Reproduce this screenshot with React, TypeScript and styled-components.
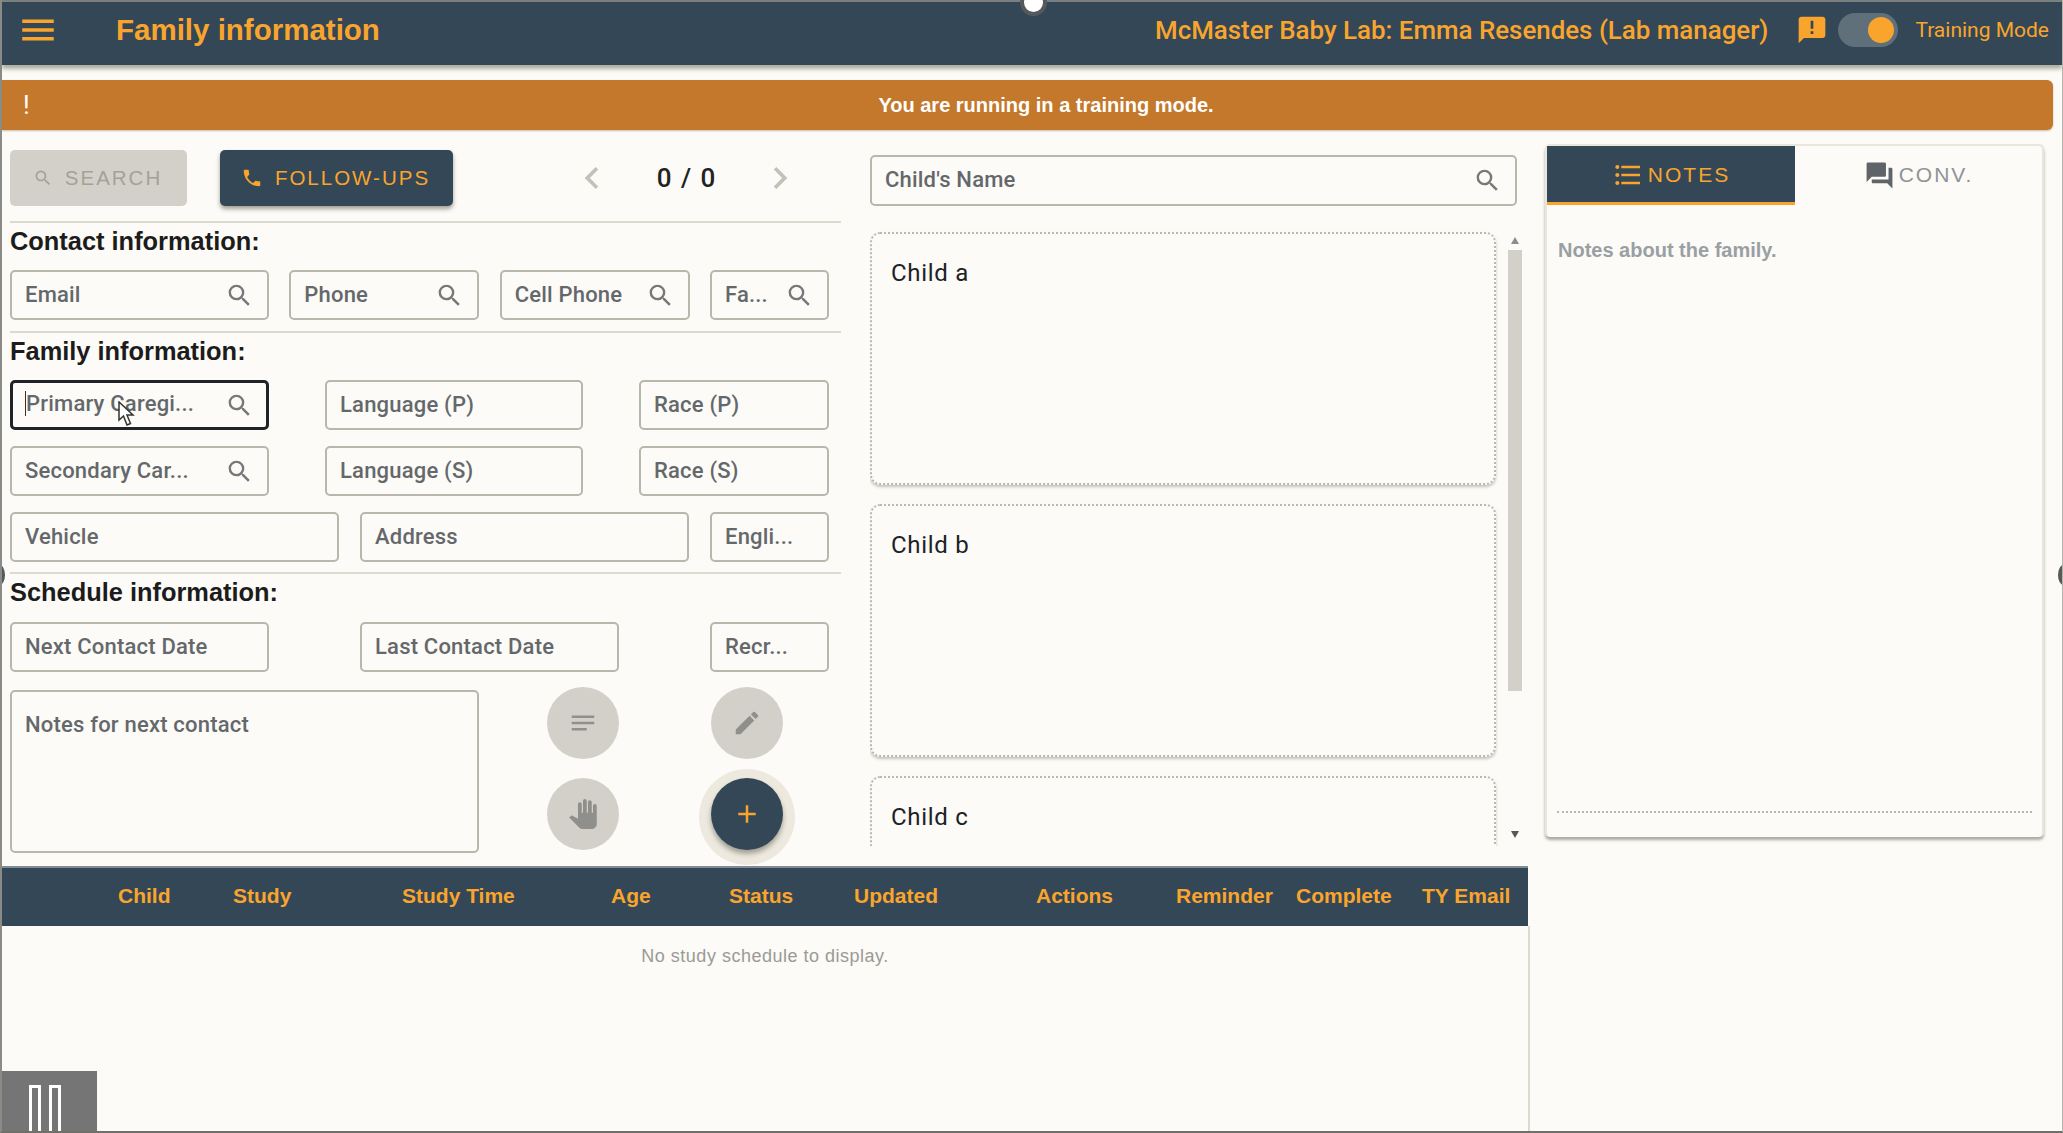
import styled, { createGlobalStyle } from 'styled-components';
import {
  MdAdd,
  MdAnnouncement,
  MdChevronLeft,
  MdChevronRight,
  MdEdit,
  MdFormatListBulleted,
  MdMenu,
  MdNotes,
  MdPanTool,
  MdPhone,
  MdQuestionAnswer,
  MdSearch,
} from 'react-icons/md';

const navy = '#344756';
const orange = '#f9a52d';
const paper = '#fcfbf7';
const line = '#b9b6ac';
const arial = "'Liberation Sans', Arial, sans-serif";

const GlobalStyle = createGlobalStyle`
  html, body {
    margin: 0;
    background: ${paper};
    overflow: hidden;
  }
  * {
    box-sizing: border-box;
  }
`;

const contactRow = '259px 190px 190px 119px';
const familyRow = '259px 258px 190px';
const vehicleRow = '329px 329px 119px';
const scheduleRow = '259px 259px 119px';

const columns = [
  { label: 'Child', width: 115 },
  { label: 'Study', width: 169 },
  { label: 'Study Time', width: 209 },
  { label: 'Age', width: 118 },
  { label: 'Status', width: 125 },
  { label: 'Updated', width: 182 },
  { label: 'Actions', width: 140 },
  { label: 'Reminder', width: 120 },
  { label: 'Complete', width: 126 },
  { label: 'TY Email', width: 100 },
];

const Field = ({
  label,
  search,
  focused,
}: {
  label: string;
  search?: boolean;
  focused?: boolean;
}) => (
  <FieldBox $focused={focused}>
    <FieldLabel $focused={focused}>{label}</FieldLabel>
    {search && <MdSearch size={29} color="#77787a" />}
    {focused && (
      <Pointer width="20" height="26" viewBox="0 0 20 26">
        <path
          d="M2 1 L2 19 L6.5 15 L10 24 L13.5 22.5 L10 14 L16 14 Z"
          fill="#fff"
          stroke="#333"
          strokeWidth="1.5"
        />
      </Pointer>
    )}
  </FieldBox>
);

const App = () => {
  return (
    <Frame>
      <GlobalStyle />
      <TopNotch />
      <SideHandle $side="left" />
      <SideHandle $side="right" />

      <TopBar>
        <MenuSlot>
          <MdMenu size={42} color={orange} />
        </MenuSlot>
        <PageTitle>Family information</PageTitle>
        <UserName>McMaster Baby Lab: Emma Resendes (Lab manager)</UserName>
        <MdAnnouncement size={32} color={orange} />
        <Toggle>
          <ToggleKnob />
        </Toggle>
        <ModeLabel>Training Mode</ModeLabel>
      </TopBar>

      <Banner>
        <BannerMark>!</BannerMark>
        <BannerText>You are running in a training mode.</BannerText>
      </Banner>

      <Content>
        <MainArea>
          <Upper>
            <FamilyColumn>
              <Toolbar>
                <SearchButton>
                  <MdSearch size={20} />
                  SEARCH
                </SearchButton>
                <FollowUpButton>
                  <MdPhone size={22} />
                  FOLLOW-UPS
                </FollowUpButton>
                <Pager>
                  <MdChevronLeft size={44} color="#c4c2b8" />
                  <PagerCount>0 / 0</PagerCount>
                  <MdChevronRight size={44} color="#c4c2b8" />
                </Pager>
              </Toolbar>

              <ToolbarDivider />
              <SectionTitle>Contact information:</SectionTitle>
              <FieldRow $columns={contactRow}>
                <Field label="Email" search />
                <Field label="Phone" search />
                <Field label="Cell Phone" search />
                <Field label="Fa..." search />
              </FieldRow>

              <Divider />
              <SectionTitle>Family information:</SectionTitle>
              <FieldStack>
                <FieldRow $columns={familyRow}>
                  <Field label="Primary Caregi..." search focused />
                  <Field label="Language (P)" />
                  <Field label="Race (P)" />
                </FieldRow>
                <FieldRow $columns={familyRow}>
                  <Field label="Secondary Car..." search />
                  <Field label="Language (S)" />
                  <Field label="Race (S)" />
                </FieldRow>
                <FieldRow $columns={vehicleRow}>
                  <Field label="Vehicle" />
                  <Field label="Address" />
                  <Field label="Engli..." />
                </FieldRow>
              </FieldStack>

              <Divider />
              <ScheduleTitle>Schedule information:</ScheduleTitle>
              <FieldRow $columns={scheduleRow}>
                <Field label="Next Contact Date" />
                <Field label="Last Contact Date" />
                <Field label="Recr..." />
              </FieldRow>

              <NotesRow>
                <NotesBox>Notes for next contact</NotesBox>
                <ActionGrid>
                  <RoundButton>
                    <MdNotes size={30} />
                  </RoundButton>
                  <RoundButton>
                    <MdEdit size={30} />
                  </RoundButton>
                  <RoundButton>
                    <MdPanTool size={30} />
                  </RoundButton>
                  <AddButton>
                    <MdAdd size={30} />
                  </AddButton>
                </ActionGrid>
              </NotesRow>
            </FamilyColumn>

            <ChildColumn>
              <ChildSearch>
                <FieldLabel>Child's Name</FieldLabel>
                <MdSearch size={29} color="#77787a" />
              </ChildSearch>
              <ChildList>
                <ChildCards>
                  <ChildCard>Child a</ChildCard>
                  <ChildCard>Child b</ChildCard>
                  <ChildCard>Child c</ChildCard>
                </ChildCards>
                <ScrollBar>
                  <ScrollArrow $up />
                  <ScrollThumb />
                  <ScrollArrow />
                </ScrollBar>
              </ChildList>
            </ChildColumn>
          </Upper>

          <ScheduleHead>
            {columns.map((column) => (
              <HeadCell key={column.label} $width={column.width}>
                {column.label}
              </HeadCell>
            ))}
          </ScheduleHead>
          <ScheduleBody>No study schedule to display.</ScheduleBody>
        </MainArea>

        <NotesPanel>
          <Tabs>
            <Tab $active>
              <MdFormatListBulleted size={32} />
              NOTES
            </Tab>
            <Tab>
              <MdQuestionAnswer size={31} color="#5f6469" />
              CONV.
            </Tab>
          </Tabs>
          <PanelText>Notes about the family.</PanelText>
          <PanelRule />
        </NotesPanel>
      </Content>

      <PauseBox>
        <svg width="34" height="48" viewBox="0 0 34 48">
          <rect x="1.5" y="1.5" width="9" height="50" fill="none" stroke="#fff" strokeWidth="3" />
          <rect x="21.5" y="1.5" width="9" height="50" fill="none" stroke="#fff" strokeWidth="3" />
        </svg>
      </PauseBox>
    </Frame>
  );
};

export default App;

const Frame = styled.div`
  position: relative;
  width: 2063px;
  height: 1133px;
  overflow: hidden;
  border-left: 2px solid #8b8b86;
  border-right: 1px solid #b5b5b0;
  border-bottom: 2px solid #6f6f6c;
  background: ${paper};
  font-family: Roboto, 'Liberation Sans', sans-serif;
`;

const TopNotch = styled.div`
  position: absolute;
  z-index: 3;
  top: -11px;
  left: 1018px;
  width: 27px;
  height: 27px;
  border-radius: 50%;
  border: 4px solid #55595c;
  background: #fff;
`;

const SideHandle = styled.div<{ $side: 'left' | 'right' }>`
  position: absolute;
  z-index: 3;
  top: 565px;
  ${({ $side }) => ($side === 'left' ? 'left: -8px;' : 'right: -7px;')}
  width: 11px;
  height: 20px;
  border-radius: 50%;
  background: #55595c;
`;

const TopBar = styled.header`
  display: flex;
  align-items: center;
  height: 65px;
  padding: 0 13px 7px 0;
  border-top: 2px solid #7c7f80;
  background: ${navy};
  box-shadow: 0 4px 4px rgba(80, 80, 60, 0.45);
  color: ${orange};
`;

const MenuSlot = styled.div`
  display: flex;
  width: 114px;
  padding-left: 15px;
`;

const PageTitle = styled.h1`
  flex: 1;
  margin: 0;
  font-family: ${arial};
  font-size: 29.5px;
  font-weight: 700;
`;

const UserName = styled.div`
  margin-right: 28px;
  font-size: 25.9px;
  font-weight: 500;
`;

const Toggle = styled.div`
  display: flex;
  align-items: center;
  justify-content: flex-end;
  width: 60px;
  height: 34px;
  margin-left: 10px;
  padding-right: 4px;
  border-radius: 17px;
  background: #5f707b;
`;

const ToggleKnob = styled.div`
  width: 26px;
  height: 26px;
  border-radius: 50%;
  background: ${orange};
`;

const ModeLabel = styled.div`
  margin-left: 17px;
  font-size: 21px;
`;

const Banner = styled.div`
  display: flex;
  align-items: center;
  height: 50px;
  margin: 15px 9px 0 0;
  border-radius: 0 6px 6px 0;
  background: #c4782b;
  box-shadow: 0 1px 2px rgba(120, 100, 60, 0.4);
  color: #fff;
`;

const BannerMark = styled.span`
  width: 0;
  margin-left: 21px;
  font-size: 26px;
`;

const BannerText = styled.div`
  flex: 1;
  padding-left: 16px;
  text-align: center;
  font-family: ${arial};
  font-size: 20px;
  font-weight: 700;
`;

const Content = styled.div`
  display: flex;
  height: 1001px;
`;

const MainArea = styled.main`
  display: flex;
  flex-direction: column;
  width: 1526px;
`;

const Upper = styled.div`
  display: flex;
  height: 736px;
`;

const FamilyColumn = styled.section`
  width: 868px;
  padding: 20px 0 0 8px;
`;

const Toolbar = styled.div`
  display: flex;
  align-items: center;
  height: 56px;
`;

const SearchButton = styled.div`
  display: flex;
  align-items: center;
  justify-content: center;
  gap: 12px;
  width: 177px;
  height: 56px;
  padding-right: 2px;
  border-radius: 5px;
  background: #d3d0c9;
  color: #a3a299;
  font-family: ${arial};
  font-size: 20.5px;
  letter-spacing: 2px;
`;

const FollowUpButton = styled(SearchButton)`
  width: 233px;
  margin-left: 33px;
  background: ${navy};
  box-shadow: 0 3px 4px rgba(70, 70, 60, 0.5);
  color: ${orange};
`;

const Pager = styled.div`
  display: flex;
  align-items: center;
  justify-content: space-between;
  width: 232px;
  margin-left: 117px;
`;

const PagerCount = styled.div`
  color: #222;
  font-size: 26px;
  font-weight: 500;
  word-spacing: 3px;
`;

const Divider = styled.hr`
  width: 831px;
  height: 2px;
  margin: 11px 0 0;
  border: 0;
  background: #dcd9cf;
`;

const ToolbarDivider = styled(Divider)`
  margin-top: 15px;
`;

const SectionTitle = styled.h2`
  height: 47px;
  margin: 0;
  padding-top: 3px;
  color: #1c1c1c;
  font-family: ${arial};
  font-size: 25.4px;
  font-weight: 700;
  line-height: 30px;
`;

const ScheduleTitle = styled(SectionTitle)`
  height: 48px;
`;

const FieldStack = styled.div`
  display: flex;
  flex-direction: column;
  gap: 16px;

  & + ${Divider} {
    margin-top: 10px;
  }
`;

const FieldRow = styled.div<{ $columns: string }>`
  display: grid;
  grid-template-columns: ${({ $columns }) => $columns};
  justify-content: space-between;
  width: 819px;
`;

const FieldBox = styled.div<{ $focused?: boolean }>`
  position: relative;
  display: flex;
  align-items: center;
  justify-content: space-between;
  height: 50px;
  padding: 0 13px 0 13px;
  border-radius: 5px;
  border: ${({ $focused }) => ($focused ? '3px solid #1f2226' : `2px solid ${line}`)};
  ${({ $focused }) => ($focused ? 'padding-left: 12px; padding-right: 12px;' : '')}
`;

const FieldLabel = styled.span<{ $focused?: boolean }>`
  ${({ $focused }) => ($focused ? 'margin-top: -3px; border-left: 1px solid #333;' : 'margin-top: -2px;')}
  color: #65686b;
  font-size: 22px;
  font-weight: 500;
  letter-spacing: 0.2px;
  white-space: nowrap;
`;

const Pointer = styled.svg`
  position: absolute;
  top: 18px;
  left: 104px;
`;

const NotesRow = styled.div`
  display: flex;
  margin-top: 18px;
`;

const NotesBox = styled.div`
  width: 469px;
  height: 163px;
  padding: 20px 13px;
  border-radius: 5px;
  border: 2px solid ${line};
  color: #65686b;
  font-size: 22px;
  font-weight: 500;
  letter-spacing: 0.2px;
`;

const ActionGrid = styled.div`
  display: grid;
  grid-template-columns: 72px 72px;
  grid-auto-rows: 72px;
  column-gap: 92px;
  row-gap: 19px;
  margin: -3px 0 0 68px;
`;

const RoundButton = styled.div`
  display: flex;
  align-items: center;
  justify-content: center;
  border-radius: 50%;
  background: #d3d0c9;
  color: #8f8f8c;
`;

const AddButton = styled(RoundButton)`
  background: ${navy};
  box-shadow: 0 4px 5px rgba(70, 70, 60, 0.45), 0 3px 0 12px #ede9df;
  color: ${orange};
`;

const ChildColumn = styled.section`
  width: 658px;
  padding-top: 25px;
`;

const ChildSearch = styled(FieldBox)`
  width: 647px;
  height: 51px;
`;

const ChildList = styled.div`
  display: flex;
  height: 615px;
  margin-top: 25px;
  overflow: hidden;
`;

const ChildCards = styled.div`
  display: flex;
  flex-direction: column;
  gap: 19px;
  width: 626px;
  padding-top: 1px;
`;

const ChildCard = styled.div`
  flex: none;
  width: 626px;
  height: 253px;
  padding: 25px 19px;
  border-radius: 10px;
  border: 2px dotted #b9b7ae;
  box-shadow: 0 2px 3px rgba(90, 90, 80, 0.35);
  color: #202124;
  font-size: 24px;
  letter-spacing: 0.7px;
`;

const ScrollBar = styled.div`
  display: flex;
  flex-direction: column;
  align-items: center;
  width: 14px;
  height: 615px;
  margin-left: 12px;
  padding-top: 6px;
`;

const ScrollArrow = styled.div<{ $up?: boolean }>`
  width: 0;
  height: 0;
  border-left: 4px solid transparent;
  border-right: 4px solid transparent;
  ${({ $up }) =>
    $up ? 'border-bottom: 7px solid #8d8d88;' : 'margin-top: 140px; border-top: 7px solid #55595c;'}
`;

const ScrollThumb = styled.div`
  flex: none;
  width: 14px;
  height: 441px;
  margin-top: 6px;
  background: #d3d0c9;
`;

const ScheduleHead = styled.div`
  display: flex;
  align-items: center;
  height: 60px;
  padding: 0 0 2px 116px;
  background: ${navy};
  border-top: 2px solid #7f8c94;
`;

const HeadCell = styled.div<{ $width: number }>`
  flex: none;
  width: ${({ $width }) => $width}px;
  color: ${orange};
  font-family: ${arial};
  font-size: 21px;
  font-weight: 700;
  white-space: nowrap;
`;

const ScheduleBody = styled.div`
  flex: 1;
  padding-top: 20px;
  border-right: 2px solid #dcd9cf;
  margin-right: -2px;
  text-align: center;
  color: #9a9a96;
  font-family: ${arial};
  font-size: 18px;
  letter-spacing: 0.5px;
`;

const NotesPanel = styled.aside`
  width: 499px;
  height: 693px;
  margin: 14px 0 0 17px;
  border-radius: 5px;
  border: 2px solid #e9e6dc;
  border-bottom: 0;
  box-shadow: 0 3px 3px rgba(90, 90, 80, 0.5);
`;

const Tabs = styled.div`
  display: grid;
  grid-template-columns: 248px 1fr;
`;

const Tab = styled.div<{ $active?: boolean }>`
  display: flex;
  align-items: center;
  justify-content: center;
  gap: 4px;
  height: 59px;
  padding-top: 2px;
  background: ${({ $active }) => ($active ? navy : 'transparent')};
  border-bottom: 3px solid ${({ $active }) => ($active ? orange : 'transparent')};
  color: ${({ $active }) => ($active ? orange : '#909396')};
  font-family: ${arial};
  font-size: 21px;
  letter-spacing: 2px;
`;

const PanelText = styled.p`
  height: 606px;
  margin: 0;
  padding: 34px 11px 0;
  color: #9a9fa3;
  font-family: ${arial};
  font-size: 20px;
  font-weight: 700;
`;

const PanelRule = styled.div`
  height: 0;
  margin: 0 10px;
  border-top: 2px dotted #b9b7ae;
`;

const PauseBox = styled.div`
  position: absolute;
  left: -2px;
  bottom: -2px;
  width: 97px;
  height: 62px;
  padding: 14px 0 0 29px;
  overflow: hidden;
  background: #757575;
`;
